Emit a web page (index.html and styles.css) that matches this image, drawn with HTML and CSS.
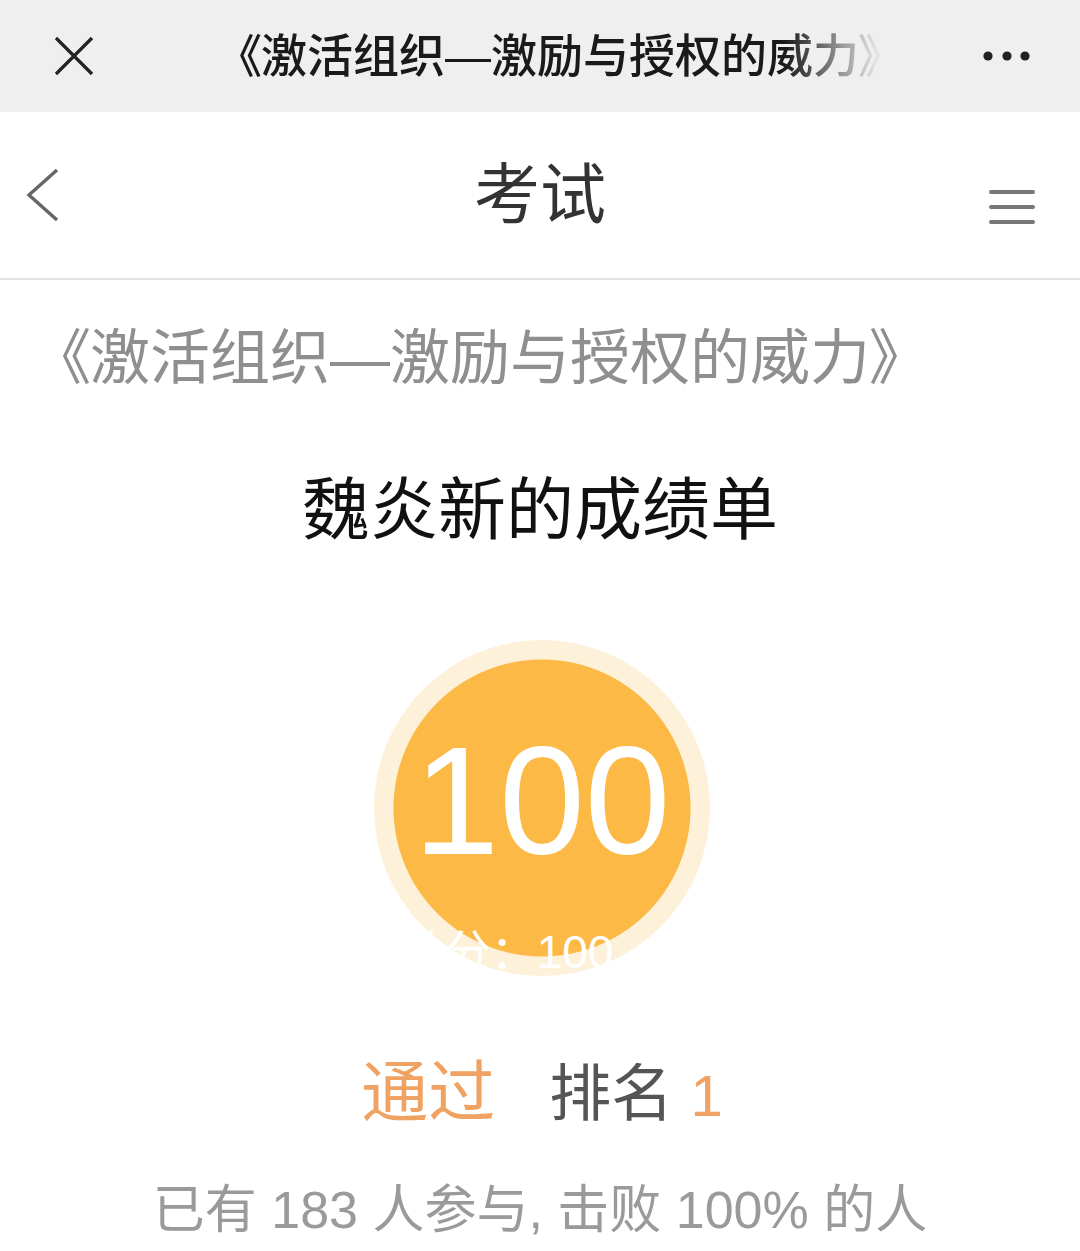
FILE: index.html
```html
<!DOCTYPE html>
<html lang="zh-CN">
<head>
    <meta charset="utf-8">
    <title>考试</title>
    <meta name="viewport" content="width=device-width, initial-scale=1">
    <link rel="stylesheet" href="styles.css">
</head>
<body>
<div class="topbar">
    <svg class="close" width="40" height="40" viewBox="0 0 40 40">
        <path d="M2 2 L38 38 M38 2 L2 38" stroke="#222" stroke-width="3.2" fill="none"/>
    </svg>
    <div class="topbar-title">《激活组织—激励与授权的威力》</div>
    <svg class="more" width="54" height="12" viewBox="0 0 54 12">
        <circle cx="8" cy="6" r="4.6" fill="#222"/>
        <circle cx="27" cy="6" r="4.6" fill="#222"/>
        <circle cx="45" cy="6" r="4.6" fill="#222"/>
    </svg>
</div>

<div class="navbar">
    <svg class="back" width="34" height="54" viewBox="0 0 34 54">
        <path d="M31 2 L3 27 L31 52" stroke="#666" stroke-width="3.4" fill="none"/>
    </svg>
    <div class="navbar-title">考试</div>
    <svg class="menu" width="48" height="36" viewBox="0 0 48 36">
        <path d="M3 2 H45 M3 17 H45 M3 32 H45" stroke="#777" stroke-width="4" stroke-linecap="round"/>
    </svg>
</div>

<div class="content">
    <!-- 课程名 -->
    <div class="course">《激活组织—激励与授权的威力》</div>
    <div class="report-title">魏炎新的成绩单</div>

    <div class="score-ring">
        <div class="score">100</div>
        <div class="score-total">总分：100</div>
    </div>

    <div class="result">
        <span class="pass">通过</span>
        <span class="rank">排名 <em>1</em></span>
    </div>
    <div class="summary">已有 183 人参与, 击败 100% 的人</div>
</div>
</body>
</html>
```

FILE: styles.css
```css
body {
    margin: 0;
    background: #fff;
    font-family: "Liberation Sans", "Noto Sans CJK SC", sans-serif;
    color: #333;
}

/* 微信顶栏 */
.topbar {
    display: flex;
    align-items: center;
    height: 112px;
    padding: 0 46px 0 54px;
    background: #efefef;
}

.topbar-title {
    width: 644px;
    margin-left: 144px;
    white-space: nowrap;
    font-size: 46px;
    line-height: 46px;
    font-weight: 500;
    color: #1a1a1a;
    font-feature-settings: "palt";
    -webkit-mask-image: linear-gradient(to right, #000 85%, rgba(0, 0, 0, 0.06) 99%);
    mask-image: linear-gradient(to right, #000 85%, rgba(0, 0, 0, 0.06) 99%);
}

.more {
    margin-left: auto;
}

/* 页面导航 */
.navbar {
    display: grid;
    grid-template-columns: 1fr auto 1fr;
    align-items: center;
    height: 166px;
    padding: 0 44px;
    border-bottom: 2px solid #e3e3e3;
}

.navbar .back {
    justify-self: start;
    margin-left: -18px;
}

.navbar-title {
    font-size: 66px;
    line-height: 66px;
    color: #333;
}

.navbar .menu {
    justify-self: end;
    margin-top: 26px;
}

.content {
    display: flex;
    flex-direction: column;
    align-items: center;
}

.course {
    align-self: flex-start;
    margin: 49px 0 0 60px;
    font-size: 60px;
    line-height: 60px;
    color: #8f8f8f;
    font-feature-settings: "palt";
    white-space: nowrap;
}

.report-title {
    margin-top: 87px;
    font-size: 68px;
    line-height: 68px;
    color: #111;
}

.score-ring {
    display: flex;
    flex-direction: column;
    align-items: center;
    box-sizing: border-box;
    width: 336px;
    height: 336px;
    margin: 96px 0 0 4px;
    padding-top: 83px;
    border-radius: 50%;
    background: radial-gradient(circle, #fcb945 148px, #fdf1d9 149px);
    color: #fff;
}

.score {
    font-size: 154px;
    line-height: 156px;
}

.score-total {
    margin: 50px 72px 0 0;
    font-size: 46px;
    line-height: 46px;
    white-space: nowrap;
}

.result {
    display: flex;
    align-items: baseline;
    gap: 54px;
    margin: 85px 0 0 4px;
    font-size: 67px;
    line-height: 64px;
}

.pass {
    color: #f0a262;
}

.rank {
    font-size: 62px;
    color: #555;
}

.rank em {
    font-style: normal;
    font-size: 58px;
    color: #f0a262;
}

.summary {
    margin-top: 56px;
    font-size: 52px;
    line-height: 52px;
    color: #9a9a9a;
    white-space: nowrap;
}
```
